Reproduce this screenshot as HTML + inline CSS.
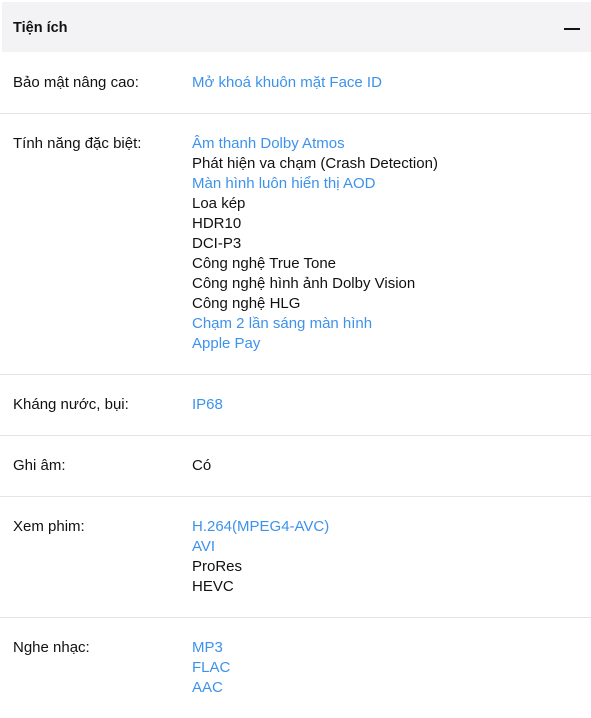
<!DOCTYPE html>
<html><head><meta charset="utf-8"><style>
body{margin:0;background:#fff;font-family:"Liberation Sans",Arial,sans-serif;font-size:15px;color:#111;width:591px;height:709px;overflow:hidden}
.hd{position:absolute;left:2px;top:2px;width:589px;height:50px;background:#f3f3f5}
.hd b{position:absolute;left:11px;top:18px;font-size:14.5px}
.hd i{position:absolute;left:562px;top:26px;width:16px;height:2px;background:#111}
.rows{position:absolute;top:53px;left:0;width:591px}
.r{padding:20px 0 20px;border-bottom:1px solid #e4e4e4;display:flex;line-height:20px}
.r:last-child{border-bottom:none}
.l{width:179px;padding-left:13px}
.b{color:#3d92ec}
</style></head><body>
<div class="hd"><b>Tiện ích</b><i></i></div>
<div class="rows">
<div class="r"><div class="l">Bảo mật nâng cao:</div><div><div class="b">Mở khoá khuôn mặt Face ID</div></div></div>
<div class="r"><div class="l">Tính năng đặc biệt:</div><div>
<div class="b">Âm thanh Dolby Atmos</div><div>Phát hiện va chạm (Crash Detection)</div><div class="b">Màn hình luôn hiển thị AOD</div><div>Loa kép</div><div>HDR10</div><div>DCI-P3</div><div>Công nghệ True Tone</div><div>Công nghệ hình ảnh Dolby Vision</div><div>Công nghệ HLG</div><div class="b">Chạm 2 lần sáng màn hình</div><div class="b">Apple Pay</div></div></div>
<div class="r"><div class="l">Kháng nước, bụi:</div><div><div class="b">IP68</div></div></div>
<div class="r"><div class="l">Ghi âm:</div><div><div>Có</div></div></div>
<div class="r"><div class="l">Xem phim:</div><div><div class="b">H.264(MPEG4-AVC)</div><div class="b">AVI</div><div>ProRes</div><div>HEVC</div></div></div>
<div class="r"><div class="l">Nghe nhạc:</div><div><div class="b">MP3</div><div class="b">FLAC</div><div class="b">AAC</div></div></div>
</div>
</body></html>
